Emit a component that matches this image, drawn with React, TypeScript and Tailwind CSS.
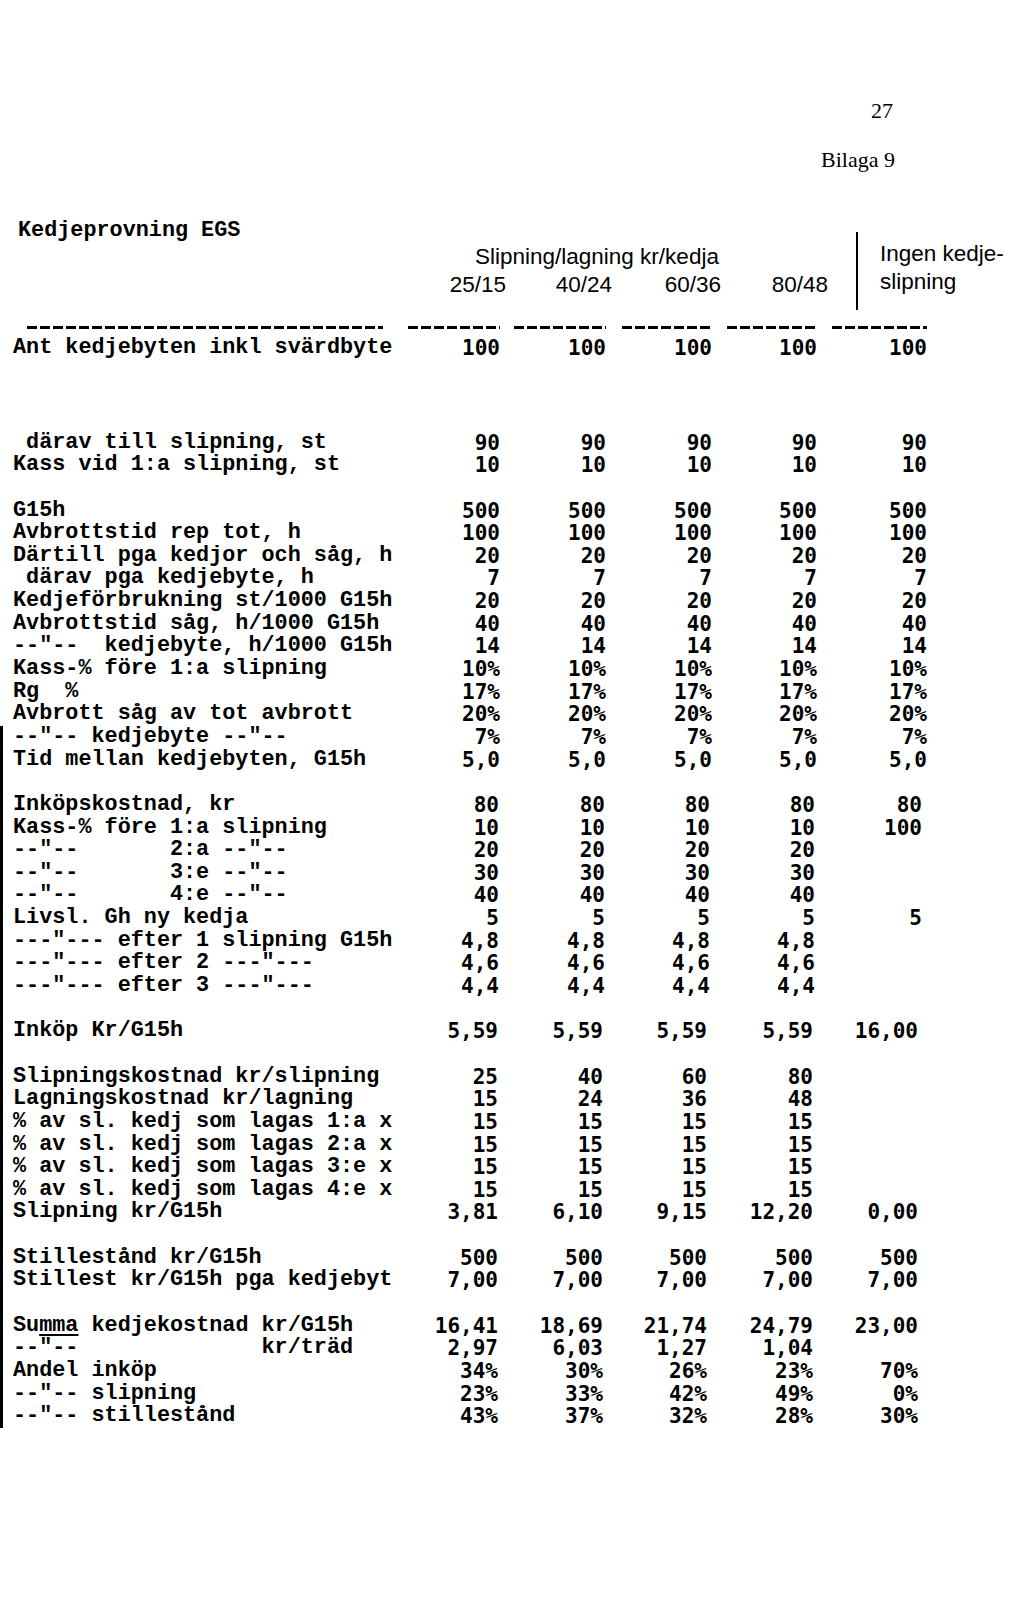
import React from 'react';

// column templates, measured off the scan (right edges of the number columns drift a little per block)
const COLS_A = 'grid-cols-[395px_92px_106px_106px_105px_110px]';
const COLS_B = 'grid-cols-[395px_91px_106px_105px_105px_107px]';
const COLS_C = 'grid-cols-[395px_90px_105px_104px_106px_105px]';

const DASH = 'h-[3px] bg-[repeating-linear-gradient(90deg,#000_0px,#000_10px,transparent_10px,transparent_13px)]';

type Line = { label: React.ReactNode; values?: string[]; cols?: string } | null;

const five = (v: string) => [v, v, v, v, v];
const four = (v: string) => [v, v, v, v, ''];

const upper: Line[] = [
  { label: ' därav till slipning, st', values: five('90') },
  { label: 'Kass vid 1:a slipning, st', values: five('10') },
  null,
  { label: 'G15h', values: five('500') },
  { label: 'Avbrottstid rep tot, h', values: five('100') },
  { label: 'Därtill pga kedjor och såg, h', values: five('20') },
  { label: ' därav pga kedjebyte, h', values: five('7') },
  { label: 'Kedjeförbrukning st/1000 G15h', values: five('20') },
  { label: 'Avbrottstid såg, h/1000 G15h', values: five('40') },
  { label: '--"--  kedjebyte, h/1000 G15h', values: five('14') },
  { label: 'Kass-% före 1:a slipning', values: five('10%') },
  { label: 'Rg  %', values: five('17%') },
  { label: 'Avbrott såg av tot avbrott', values: five('20%') },
];

const lower: Line[] = [
  { label: '--"-- kedjebyte --"--', values: five('7%') },
  { label: 'Tid mellan kedjebyten, G15h', values: five('5,0') },
  null,
  { label: 'Inköpskostnad, kr', values: five('80'), cols: COLS_B },
  { label: 'Kass-% före 1:a slipning', values: ['10', '10', '10', '10', '100'], cols: COLS_B },
  { label: '--"--       2:a --"--', values: four('20'), cols: COLS_B },
  { label: '--"--       3:e --"--', values: four('30'), cols: COLS_B },
  { label: '--"--       4:e --"--', values: four('40'), cols: COLS_B },
  { label: 'Livsl. Gh ny kedja', values: five('5'), cols: COLS_B },
  { label: '---"--- efter 1 slipning G15h', values: four('4,8'), cols: COLS_B },
  { label: '---"--- efter 2 ---"---', values: four('4,6'), cols: COLS_B },
  { label: '---"--- efter 3 ---"---', values: four('4,4'), cols: COLS_B },
  null,
  { label: 'Inköp Kr/G15h', values: ['5,59', '5,59', '5,59', '5,59', '16,00'], cols: COLS_C },
  null,
  { label: 'Slipningskostnad kr/slipning', values: ['25', '40', '60', '80', ''], cols: COLS_C },
  { label: 'Lagningskostnad kr/lagning', values: ['15', '24', '36', '48', ''], cols: COLS_C },
  { label: '% av sl. kedj som lagas 1:a x', values: four('15'), cols: COLS_C },
  { label: '% av sl. kedj som lagas 2:a x', values: four('15'), cols: COLS_C },
  { label: '% av sl. kedj som lagas 3:e x', values: four('15'), cols: COLS_C },
  { label: '% av sl. kedj som lagas 4:e x', values: four('15'), cols: COLS_C },
  { label: 'Slipning kr/G15h', values: ['3,81', '6,10', '9,15', '12,20', '0,00'], cols: COLS_C },
  null,
  { label: 'Stillestånd kr/G15h', values: five('500'), cols: COLS_C },
  { label: 'Stillest kr/G15h pga kedjebyt', values: five('7,00'), cols: COLS_C },
  null,
  {
    label: (
      <>
        Su<span className="underline decoration-2 underline-offset-[3px]">mma</span> kedjekostnad kr/G15h
      </>
    ),
    values: ['16,41', '18,69', '21,74', '24,79', '23,00'],
    cols: COLS_C,
  },
  { label: '--"--              kr/träd', values: ['2,97', '6,03', '1,27', '1,04', ''], cols: COLS_C },
  { label: 'Andel inköp', values: ['34%', '30%', '26%', '23%', '70%'], cols: COLS_C },
  { label: '--"-- slipning', values: ['23%', '33%', '42%', '49%', '0%'], cols: COLS_C },
  { label: '--"-- stillestånd', values: ['43%', '37%', '32%', '28%', '30%'], cols: COLS_C },
];

function DataRow({ line }: { line: Line }) {
  if (!line) return <div className="h-[22.65px]" />;
  const cols = line.cols ?? COLS_A;
  return (
    <div className={`grid ${cols} h-[22.65px] leading-[22.65px]`}>
      <span className="whitespace-pre font-['Liberation_Mono',monospace] text-[21.8px] font-bold">{line.label}</span>
      {(line.values ?? []).map((v, i) => (
        <span key={i} className="text-right font-['DejaVu_Sans_Mono',monospace] text-[21px] font-bold">
          {v}
        </span>
      ))}
    </div>
  );
}

export default function App() {
  return (
    <div className="min-h-[1608px] w-[1024px] bg-white pl-[13px] pt-[99px] text-black">
      <div className="font-['Liberation_Serif','Times_New_Roman',serif] text-[22px] leading-[24px]">
        <div className="flex justify-end pr-[131px]">27</div>
        <div className="mt-[25px] flex justify-end pr-[129px]">Bilaga 9</div>
      </div>

      <div className="mt-[48px] flex items-start">
        <div className="w-[432px] whitespace-pre pl-[5px] font-['Liberation_Mono',monospace] text-[21.8px] font-bold leading-[22.65px]">
          Kedjeprovning EGS
        </div>
        <div className="mt-[23px] font-['Liberation_Sans',Arial,sans-serif] text-[22.5px] leading-[28px]">
          <div className="pl-[30px]">Slipning/lagning kr/kedja</div>
          <div className="grid grid-cols-[61px_106px_109px_107px] text-right">
            <span>25/15</span>
            <span>40/24</span>
            <span>60/36</span>
            <span>80/48</span>
          </div>
        </div>
        <div className="ml-[28px] mt-[12px] h-[78px] border-l-2 border-black pl-[22px] pt-[8px] font-['Liberation_Sans',Arial,sans-serif] text-[22.5px] leading-[28px]">
          <div>Ingen kedje-</div>
          <div>slipning</div>
        </div>
      </div>

      <div className={`mt-[7px] grid ${COLS_A} h-[20px] items-start pt-[9px]`}>
        <div className={`ml-[14px] w-[356px] ${DASH}`} />
        <div className={`w-[92px] justify-self-end ${DASH}`} />
        <div className={`w-[92px] justify-self-end ${DASH}`} />
        <div className={`w-[90px] justify-self-end ${DASH}`} />
        <div className={`w-[90px] justify-self-end ${DASH}`} />
        <div className={`w-[95px] justify-self-end ${DASH}`} />
      </div>
      <DataRow line={{ label: 'Ant kedjebyten inkl svärdbyte', values: five('100') }} />

      <div className="mt-[72px]">
        {upper.map((l, i) => (
          <DataRow key={i} line={l} />
        ))}
      </div>

      <div className="-ml-[13px] border-l-[3px] border-black pl-[10px]">
        {lower.map((l, i) => (
          <DataRow key={i} line={l} />
        ))}
      </div>
    </div>
  );
}
